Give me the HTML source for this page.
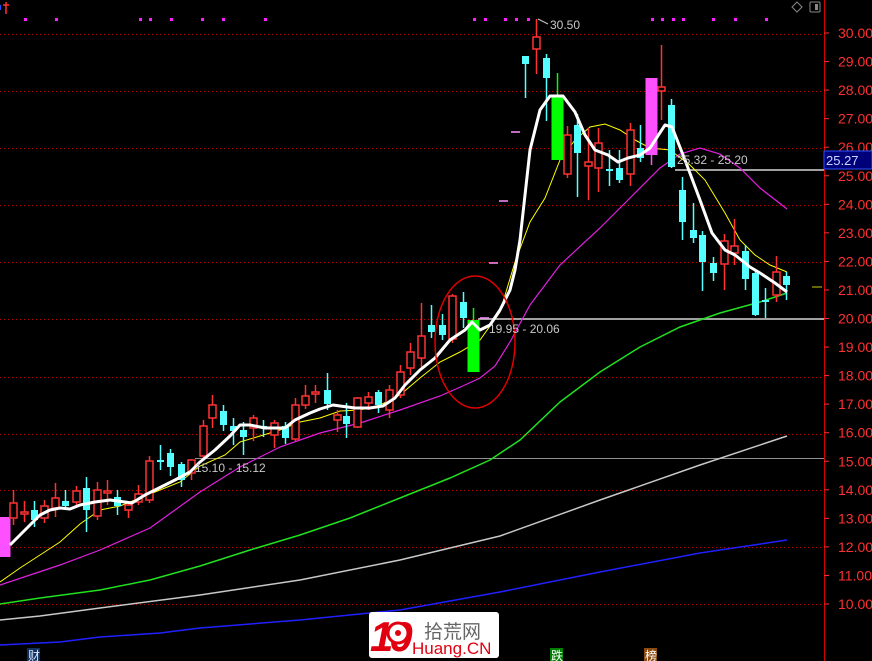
<!DOCTYPE html>
<html><head><meta charset="utf-8"><style>
html,body{margin:0;padding:0;background:#000;width:872px;height:661px;overflow:hidden}
svg{display:block}
text{font-family:"Liberation Sans","Noto Sans CJK SC",sans-serif}
</style></head><body>
<svg id="s" width="872" height="661" viewBox="0 0 872 661" xmlns="http://www.w3.org/2000/svg">
<rect width="872" height="661" fill="#000"/>
<g id="grid" stroke="#c00000" stroke-width="1" stroke-dasharray="1,3"></g>
<line x1="824.5" y1="0" x2="824.5" y2="661" stroke="#d00000"/>
<g id="axis" fill="#ff3030" font-size="14"></g>
<rect x="824" y="151" width="48" height="18" fill="#00007a" stroke="#3050ff" stroke-width="1"/>
<text x="826" y="165" fill="#c8d8ff" font-size="13">25.27</text>
<line x1="195" y1="458.5" x2="824" y2="458.5" stroke="#909090" stroke-width="1"/>
<line x1="478" y1="319" x2="824" y2="319" stroke="#a0a0a0" stroke-width="2"/>
<line x1="675" y1="170" x2="824" y2="170" stroke="#a0a0a0" stroke-width="2"/>
<polyline fill="none" stroke="#2020ff" stroke-width="1.5" points="0,645 60,642 100,637 160,633 200,628 300,620 400,610 500,592 600,572 700,553 787,540"/>
<polyline fill="none" stroke="#c8c8c8" stroke-width="1.5" points="0,620 40,616 100,608 200,595 300,580 400,560 500,536 600,500 700,465 787,436"/>
<polyline fill="none" stroke="#20e020" stroke-width="1.5" points="0,604 40,598 100,590 150,580 200,566 250,550 300,535 350,518 400,498 450,478 490,460 520,440 560,402 600,372 640,347 680,327 720,313 760,302 787,293"/>
<polyline fill="none" stroke="#e020e0" stroke-width="1.2" points="0,585 30,575 60,565 100,550 150,528 200,492 240,467 280,447 320,433 360,423 400,410 440,396 465,385 480,378 495,366 510,342 530,305 560,265 600,228 630,198 660,168 680,154 700,148 720,154 740,168 760,188 787,209"/>
<polyline fill="none" stroke="#ffff00" stroke-width="1" points="0,582 20,568 40,555 60,542 80,524 100,510 120,506 140,498 160,490 180,482 200,466 225,455 240,442 260,436 280,430 300,422 320,418 340,411 360,410 380,405 400,395 420,378 440,362 460,352 480,340 500,312 515,262 530,222 545,198 560,160 575,140 590,127 605,124 620,130 635,140 650,148 670,150 690,165 705,180 725,213 740,240 755,255 770,265 787,272"/>
<line x1="812" y1="287" x2="822" y2="287" stroke="#cccc00"/>
<g id="candles"></g>
<polyline fill="none" stroke="#ffffff" stroke-width="3" stroke-linejoin="round" points="10,545 20,535 40,515 50,510 60,508 70,509 80,505 95,502 110,500 125,502 132,503 145,495 165,485 175,480 190,472 200,462 215,450 230,436 240,425 250,425 265,428 285,428 295,420 310,413 320,409 333,405 340,406 355,408 370,408 383,406 395,398 405,385 420,370 435,358 450,340 465,330 472,322 480,330 490,325 500,310 510,290 515,270 520,240 525,195 530,150 540,110 550,96 563,96 575,112 585,135 595,150 608,155 618,162 628,158 640,155 650,148 665,125 672,127 685,160 700,200 712,233 725,250 735,255 750,267 760,273 775,283 787,292"/>
<g stroke="#ff90ff" stroke-width="1.5"><line x1="511" y1="132" x2="520" y2="132"/><line x1="499" y1="201" x2="508" y2="201"/><line x1="489" y1="263" x2="498" y2="263"/><line x1="480" y1="318" x2="489" y2="318"/></g>
<g id="dots" fill="#ff20ff"></g>
<ellipse cx="475" cy="342" rx="40" ry="66" fill="none" stroke="#e00000" stroke-width="1.5"/>
<g fill="#c8c8c8" font-size="12">
<text x="195" y="472">15.10 - 15.12</text>
<text x="489" y="333">19.95 - 20.06</text>
<text x="677" y="164">25.32 - 25.20</text>
<text x="550" y="29">30.50</text>
</g>
<polyline fill="none" stroke="#c8c8c8" points="538,19 548,24"/>
<path d="M6,2 L6,14 M3,5 L9,5" stroke="#ff3030" stroke-width="1.5"/>
<rect x="0" y="5" width="1" height="5" fill="#2050ff"/>
<path d="M797,2 L802,7 L797,12 L792,7 Z" fill="none" stroke="#888"/>
<rect x="810" y="2" width="10" height="10" rx="1" fill="none" stroke="#888"/>
<rect x="815" y="4" width="3" height="6" fill="#888"/>
<g>
<rect x="369" y="612" width="130" height="46" fill="#fff" rx="3"/>
<text x="370" y="651" fill="#e00010" font-size="42" font-weight="bold" font-style="italic" letter-spacing="-4">10</text>
<circle cx="398" cy="633" r="10" fill="#fff" stroke="#e00010" stroke-width="3"/>
<circle cx="398" cy="633" r="3" fill="#e00010"/>
<text x="424" y="638" fill="#666" font-size="19">拾荒网</text>
<text x="412" y="654" fill="#e00010" font-size="17">Huang.CN</text>
</g>
<rect x="27" y="648" width="13" height="13" fill="#103060"/>
<text x="28" y="660" fill="#e0e8ff" font-size="12">财</text>
<rect x="550" y="648" width="13" height="13" fill="#008000"/>
<text x="551" y="660" fill="#fff" font-size="12">跌</text>
<rect x="644" y="648" width="13" height="13" fill="#8a4a10"/>
<text x="645" y="660" fill="#fff" font-size="12">榜</text>
</svg>
<script>
var NS="http://www.w3.org/2000/svg";
function el(p,t,a){var e=document.createElementNS(NS,t);for(var k in a)e.setAttribute(k,a[k]);p.appendChild(e);return e;}
var g=document.getElementById('grid');
[34,91,148,205,262,319,377,434,490,547,604].forEach(function(y){el(g,'line',{x1:0,y1:y+.5,x2:824,y2:y+.5});});
var ax=document.getElementById('axis');
for(var v=30;v>=10;v--){var y=33+(30-v)*28.55;el(ax,'line',{x1:824,y1:y,x2:829,y2:y,stroke:'#ff3030'});
var t=el(ax,'text',{x:838,y:y+5});t.textContent=v.toFixed(2);}
var C=[
[4,517,557,517,557,'p'],
[13,503,518,490,525,'r'],[24,512,514,501,522,'r'],[34,510,520,501,527,'c'],[44,506,518,500,523,'r'],
[55,498,508,483,517,'r'],[65,501,506,490,510,'c'],[76,491,502,486,505,'r'],[86,488,510,477,532,'c'],
[97,490,516,482,520,'r'],[107,491,493,480,505,'r'],[117,497,506,490,515,'c'],[128,505,510,503,518,'r'],
[138,494,502,485,505,'r'],[149,461,500,456,503,'r'],[160,460,462,445,470,'c'],[170,453,467,449,476,'c'],
[181,464,480,462,487,'c'],[191,460,473,459,480,'r'],[203,426,456,420,458,'r'],[212,405,418,395,428,'r'],
[223,411,425,405,431,'c'],[233,426,431,418,445,'c'],[243,430,437,422,455,'c'],[253,418,428,415,441,'r'],
[263,426,428,420,437,'c'],[274,423,435,420,448,'r'],[285,426,438,422,444,'c'],[295,405,439,398,441,'r'],
[305,396,405,385,409,'r'],[315,392,394,385,403,'r'],[327,390,404,373,410,'c'],[337,415,420,410,432,'r'],
[346,416,424,403,438,'c'],[357,398,427,397,428,'r'],[368,397,403,392,410,'r'],[378,392,405,390,413,'c'],
[389,390,410,385,418,'r'],[400,372,395,365,398,'r'],[410,352,368,343,375,'r'],[421,336,358,303,370,'r'],
[431,325,332,305,338,'c'],[442,325,335,314,340,'c'],[452,296,339,294,343,'r'],[463,302,318,292,328,'c'],
[473,320,372,308,372,'g'],
[525,56,64,56,98,'c'],[536,37,49,19,74,'r'],[546,58,78,54,121,'c'],[557,95,160,73,160,'g'],
[567,135,174,126,178,'r'],[577,125,153,114,197,'c'],[588,162,166,128,200,'r'],[598,143,168,128,192,'r'],
[609,169,171,150,186,'c'],[619,168,180,150,183,'c'],[630,130,174,123,186,'r'],[640,148,158,125,162,'c'],
[651,78,155,78,165,'p'],[661,87,91,45,120,'r'],[671,105,167,99,168,'c'],
[682,190,222,177,240,'c'],[693,230,238,203,243,'c'],[702,235,262,231,291,'c'],[713,263,273,257,281,'c'],
[724,241,264,234,290,'r'],[734,246,253,219,265,'r'],[745,251,279,245,290,'c'],[755,273,315,270,316,'c'],
[765,300,302,288,318,'c'],[776,272,295,256,302,'r'],[786,276,285,272,300,'c']];
var cg=document.getElementById('candles');
var col={r:'#ff3232',c:'#54ffff',g:'#00ff00',p:'#ff50ff'};
C.forEach(function(c){var x=c[0],t=c[1],b=c[2],h=c[3],l=c[4],k=c[5],cl=col[k];
var w=(k==='p'||k==='g')?12:7;
el(cg,'line',{x1:x+.5,y1:h,x2:x+.5,y2:l,stroke:cl,'stroke-width':1.5});
if(k==='r'){el(cg,'rect',{x:x-3,y:t,width:7,height:Math.max(b-t,1),fill:'#000',stroke:cl,'stroke-width':1.5});}
else el(cg,'rect',{x:x-w/2+.5,y:t,width:w,height:Math.max(b-t,2),fill:cl});});
var d=document.getElementById('dots');
[24,55,139,149,170,201,222,264,473,484,504,515,527,651,661,672,682,712,734,765].forEach(function(x){el(d,'rect',{x:x,y:18,width:3,height:3});});
</script>
</body></html>
